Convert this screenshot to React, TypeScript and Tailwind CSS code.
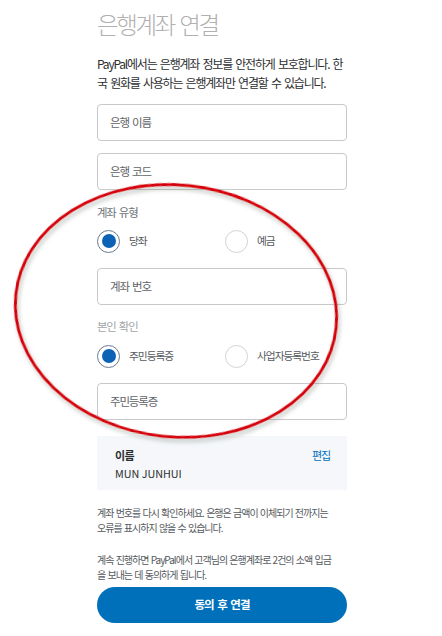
import React from "react";

function Radio({ checked, label }: { checked: boolean; label: string }) {
  return (
    <div className="flex items-center">
      {checked ? (
        <span className="flex h-[23px] w-[23px] items-center justify-center rounded-full border border-[#6a7b8f] bg-white">
          <span className="h-[14px] w-[14px] rounded-full bg-[#0c62b5]" />
        </span>
      ) : (
        <span className="h-[23px] w-[23px] rounded-full border border-[#d3d3d3] bg-white" />
      )}
      <span className="ml-[9px] text-[10.75px] leading-[16px] tracking-[-0.1em] text-[#555a5e]">{label}</span>
    </div>
  );
}

function Field({ label, className = "" }: { label: string; className?: string }) {
  return (
    <div
      className={`flex h-[37px] items-center rounded-[4px] border border-[#c9c9c9] bg-white pl-[12px] text-[11.5px] tracking-[-0.1em] [word-spacing:0.15em] text-[#5f6468] ${className}`}
    >
      {label}
    </div>
  );
}

export default function App() {
  return (
    <div className="relative min-h-[636px] w-[442px] overflow-hidden bg-white font-['Noto_Sans_CJK_KR',sans-serif]">
      <div className="ml-[97px] w-[250px] pt-[10px]">
        <h1 className="text-[23.5px] font-light leading-[28px] tracking-[-0.1em] [word-spacing:0.1em] text-[#b0b0b0]">은행계좌 연결</h1>
        <p className="mt-[16px] whitespace-nowrap text-[12px] leading-[19px] tracking-[-0.1em] [word-spacing:0.15em] text-[#2c2e2f]">
          PayPal에서는 은행계좌 정보를 안전하게 보호합니다. 한<br />국 원화를 사용하는 은행계좌만 연결할 수 있습니다.
        </p>
        <Field label="은행 이름" className="mt-[12px]" />
        <Field label="은행 코드" className="mt-[12px]" />

        <div className="mt-[13px] text-[11.4px] leading-[18px] tracking-[-0.1em] [word-spacing:0.15em] text-[#6c7378]">계좌 유형</div>
        <div className="mt-[8px] flex h-[24px] items-center">
          <div className="w-[128px]">
            <Radio checked label="당좌" />
          </div>
          <Radio checked={false} label="예금" />
        </div>
        <Field label="계좌 번호" className="mt-[15px]" />

        <div className="mt-[12px] text-[11.4px] leading-[18px] tracking-[-0.1em] [word-spacing:0.15em] text-[#a0a5a8]">본인 확인</div>
        <div className="mt-[9px] flex h-[24px] items-center">
          <div className="w-[128px]">
            <Radio checked label="주민등록증" />
          </div>
          <Radio checked={false} label="사업자등록번호" />
        </div>
        <Field label="주민등록증" className="mt-[15px]" />

        <div className="mt-[16px] h-[54px] bg-[#f5f7fa] px-[18px] pt-[11px]">
          <div className="flex items-center justify-between">
            <span className="text-[11px] font-bold leading-[16px] tracking-[-0.05em] text-[#2c2e2f]">이름</span>
            <span className="mr-[-1px] text-[11px] leading-[16px] tracking-[-0.1em] text-[#0070ba]">편집</span>
          </div>
          <div className="mt-[3px] text-[10.75px] leading-[16px] text-[#2c2e2f]">MUN JUNHUI</div>
        </div>

        <p className="mt-[15px] whitespace-nowrap text-[10px] leading-[15px] tracking-[-0.1em] [word-spacing:0.1em] text-[#555a5e]">
          계좌 번호를 다시 확인하세요. 은행은 금액이 이체되기 전까지는<br />오류를 표시하지 않을 수 있습니다.
        </p>
        <p className="mt-[17px] whitespace-nowrap text-[10px] leading-[15px] tracking-[-0.1em] [word-spacing:0.1em] text-[#555a5e]">
          계속 진행하면 PayPal에서 고객님의 은행계좌로 2건의 소액 입금<br />을 보내는 데 동의하게 됩니다.
        </p>

        <button className="mt-[5px] flex h-[36px] w-[250px] items-center justify-center rounded-full bg-[#0070ba] text-[11.5px] font-bold tracking-[-0.08em] [word-spacing:0.15em] text-white">
          동의 후 연결
        </button>
      </div>

      <svg className="pointer-events-none absolute left-0 top-0" width="442" height="636" viewBox="0 0 442 636">
        <defs>
          <filter id="sh" x="-10%" y="-10%" width="120%" height="120%">
            <feDropShadow dx="2" dy="3" stdDeviation="2" floodColor="#6b7b6b" floodOpacity="0.45" />
          </filter>
        </defs>
        <ellipse
          cx="176"
          cy="311"
          rx="161"
          ry="126"
          transform="rotate(6 176 311)"
          fill="none"
          stroke="#d6000c"
          strokeWidth="3"
          filter="url(#sh)"
        />
      </svg>
    </div>
  );
}
